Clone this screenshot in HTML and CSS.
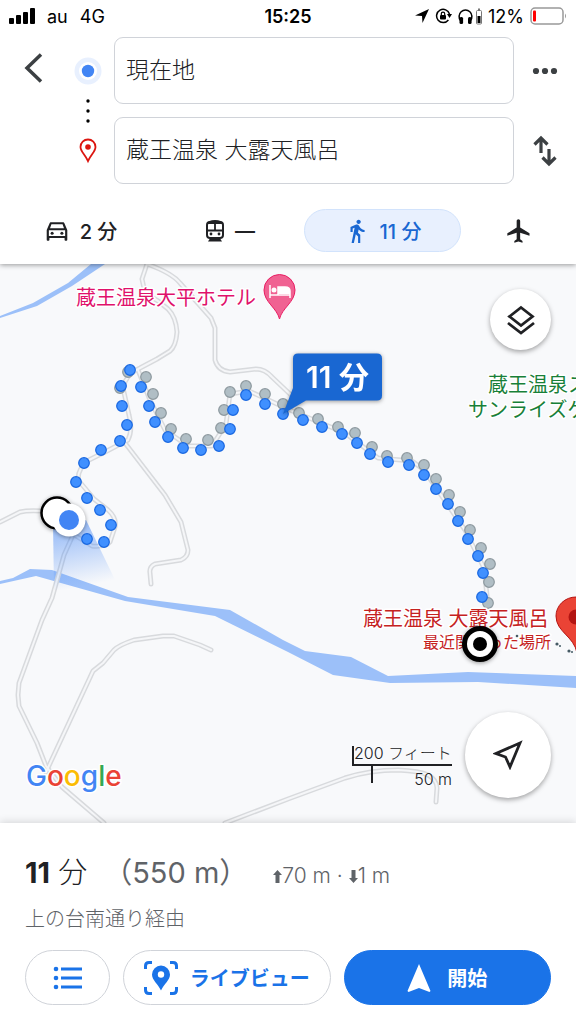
FILE: index.html
```html
<!DOCTYPE html>
<html lang="ja">

<head>
    <meta charset="utf-8">
    <meta name="viewport" content="width=device-width, initial-scale=1.0">
    <title>蔵王温泉 大露天風呂 - 経路</title>
    <link rel="stylesheet" href="styles.css">
</head>

<body>
    <header class="top">
        <div class="status">
            <div class="status_left">
                <svg width="26" height="16" viewBox="0 0 26 16">
                    <rect x="0" y="10" width="5" height="6" rx="1" />
                    <rect x="7" y="7" width="5" height="9" rx="1" />
                    <rect x="14" y="4" width="5" height="12" rx="1" />
                    <rect x="21" y="0" width="5" height="16" rx="1" />
                </svg>
                <span>au</span>
                <span>4G</span>
            </div>
            <time class="clock">15:25</time>
            <div class="status_right">
                <svg width="14" height="14" viewBox="0 0 14 14">
                    <path d="M14 0L0 6.500l7 .5.5 7z" />
                </svg>
                <svg width="17" height="16" viewBox="0 0 17 16">
                    <path d="M14.500 6A6.600 6.600 0 1 0 13.400 12" fill="none" stroke="#000" stroke-width="1.500" />
                    <path d="M12 6h5l-2.500 4z" />
                    <rect x="5" y="7" width="6" height="4.500" rx="1" />
                    <path d="M6.300 7V5.800a1.700 1.700 0 0 1 3.400 0V7" fill="none" stroke="#000" stroke-width="1.200" />
                </svg>
                <svg width="24" height="17" viewBox="0 0 24 17">
                    <path d="M2.500 12.500A6.400 6.400 0 1 1 12.500 12.500" fill="none" stroke="#000" stroke-width="1.500" />
                    <rect x="1.500" y="9" width="3.600" height="7" rx="1.500" />
                    <rect x="10" y="9" width="3.600" height="7" rx="1.500" />
                    <rect x="18.500" y="2.500" width="5" height="13.500" rx="1" fill="#fff" stroke="#777" />
                    <rect x="20" y="0.500" width="2" height="1.500" fill="#777" />
                    <rect x="19.500" y="8" width="3" height="7" />
                </svg>
                <span>12%</span>
                <svg width="37" height="18" viewBox="0 0 37 18">
                    <rect x="1" y="1" width="32" height="16" rx="4" fill="#fff" stroke="#999" stroke-width="1.500" />
                    <rect x="3" y="3.500" width="3" height="11" rx="1" fill="#f00" />
                    <path d="M35 6.500q2 2.500 0 5z" fill="#999" />
                </svg>
            </div>
        </div>

        <form class="route_form">
            <button type="button" class="icon_btn back" aria-label="戻る">
                <svg width="20" height="30" viewBox="0 0 20 30">
                    <path d="M18 1.500L4 15l14 13.500" fill="none" stroke="#3c4043" stroke-width="3.500" />
                </svg>
            </button>
            <svg class="stops" width="28" height="110" viewBox="0 0 28 110">
                <circle cx="14" cy="15" r="13.500" fill="#e8f0fe" />
                <circle cx="14" cy="15" r="9" fill="#fff" />
                <circle cx="14" cy="15" r="6.200" fill="#4285f4" />
                <circle cx="14" cy="45" r="1.700" />
                <circle cx="14" cy="55" r="1.700" />
                <circle cx="14" cy="65" r="1.700" />
                <path d="M14 105C11 98.500 6.500 95.500 6.500 91a7.500 7.500 0 0 1 15 0c0 4.500-4.500 7.500-7.500 14z" fill="#fff" stroke="#dc1610" stroke-width="1.800" />
                <circle cx="14" cy="91" r="2.800" fill="#dc1610" />
            </svg>
            <input class="field from" type="text" value="現在地" aria-label="出発地">
            <input class="field to" type="text" value="蔵王温泉 大露天風呂" aria-label="目的地">
            <button type="button" class="icon_btn more" aria-label="その他">
                <svg width="26" height="8" viewBox="0 0 26 8">
                    <circle cx="4" cy="4" r="3.100" />
                    <circle cx="13" cy="4" r="3.100" />
                    <circle cx="22" cy="4" r="3.100" />
                </svg>
            </button>
            <button type="button" class="icon_btn swap" aria-label="入れ替え">
                <svg width="24" height="32" viewBox="0 0 24 32" fill="none" stroke="#3c4043" stroke-width="3.200">
                    <path d="M8 18V3M1.500 9.500l6.500-6.500 6.500 6.500" />
                    <path d="M16 14v15M9.500 22.500l6.500 6.500 6.500-6.500" />
                </svg>
            </button>
        </form>

        <nav class="modes">
            <button class="mode">
                <svg width="26" height="26" viewBox="0 0 24 24">
                    <path d="M18.920 5.010C18.720 4.420 18.160 4 17.500 4h-11c-.66 0-1.210.42-1.420 1.010L2.500 11v9c0 .55.45 1 1 1h.5c.55 0 1-.45 1-1v-1.500h14V20c0 .55.45 1 1 1h.5c.55 0 1-.45 1-1v-9l-2.580-5.990zM6.850 5.800h10.290l1.300 3.700H5.550l1.300-3.700zM19.500 16.500h-15V11.300h15v5.200z" />
                    <circle cx="7.500" cy="14" r="1.400" />
                    <circle cx="16.500" cy="14" r="1.400" />
                </svg>
                2 分
            </button>
            <button class="mode">
                <svg width="20" height="24" viewBox="0 0 20 24">
                    <path d="M3 22.500h14l-2.500-4h-9z" />
                    <rect x="2" y="3" width="16" height="16" rx="3" fill="#fff" stroke="#202124" stroke-width="2" />
                    <path d="M2 5Q3 1 10 1t8 4z" />
                    <path d="M2 11.500h16M10 5v6.500" stroke="#202124" stroke-width="1.800" />
                    <circle cx="6" cy="15" r="1.400" />
                    <circle cx="14" cy="15" r="1.400" />
                </svg>
                —
            </button>
            <button class="mode selected">
                <svg width="26" height="26" viewBox="0 0 24 24">
                    <path d="M13.500 5.500c1.100 0 2-.9 2-2s-.9-2-2-2-2 .9-2 2 .9 2 2 2zM9.800 8.900L7 23h2.100l1.800-8 2.100 2v6h2v-7.500l-2.100-2 .6-3C14.800 12 16.800 13 19 13v-2c-1.900 0-3.500-1-4.300-2.400l-1-1.600c-.4-.6-1-1-1.700-1-.3 0-.5.1-.8.1L6 8.300V13h2V9.600l1.800-.7" />
                </svg>
                11 分
            </button>
            <button class="mode" aria-label="飛行機">
                <svg width="28" height="28" viewBox="0 0 24 24">
                    <path d="M21 16v-2l-8-5V3.500c0-.83-.67-1.500-1.500-1.500S10 2.670 10 3.500V9l-8 5v2l8-2.500V19l-2 1.500V22l3.500-1 3.500 1v-1.500L13 19v-5.500l8 2.500z" />
                </svg>
            </button>
        </nav>
    </header>

    <main class="map">
        <svg class="map_canvas" viewBox="0 264 576 559" preserveAspectRatio="xMidYMid slice">
            <defs>
                <marker id="dot_blue" markerUnits="userSpaceOnUse" markerWidth="14" markerHeight="14" refX="7" refY="7">
                    <circle cx="7" cy="7" r="5.300" fill="#4090ff" stroke="#1967e0" stroke-width="1.200" />
                </marker>
                <marker id="dot_grey" markerUnits="userSpaceOnUse" markerWidth="14" markerHeight="14" refX="7" refY="7">
                    <circle cx="7" cy="7" r="5.300" fill="#b0bec5" stroke="#8d999f" stroke-width="1.200" />
                </marker>
                <linearGradient id="beam" x1="0" y1="0" x2="0.200" y2="1">
                    <stop offset="0" stop-color="#4285f4" stop-opacity="0.600" />
                    <stop offset="1" stop-color="#4285f4" stop-opacity="0" />
                </linearGradient>
                <g id="roads">
                    <path d="M147 264L142 279L144 288Q147 295 158 301L168 309Q176 317 177 332Q176 346 170 351L157 359L140 368Q126 374 123 388L129 415Q133 430 128 440L105 452L87 461Q76 472 79 481L94 499L108 510Q117 518 115 527L110 542Q106 547 92 546L76 536" />
                    <path d="M147 264Q172 273 180 283L211 318L215 328V360Q218 371 230 372L256 369Q265 369 272 377L292 396" />
                    <path d="M125 443L165 495L181 522L188 550Q188 557 181 560L155 564Q149 567 150 573L151 584" />
                    <path d="M0 522L20 512Q28 510 42 511" />
                    <path d="M73 535L64 555L52 598L42 620L19 683L18 695L19 706L37 743L46 766L62 787L104 823" />
                    <path d="M46 772L93 671L103 663L114 650Q119 645 134 640L163 636H174L200 645L211 650" />
                    <path d="M225 823L288 799L345 778Q370 770 398 770Q420 771 428 775Q437 780 437 788L436 802" />
                    <path d="M138 370L150 400L165 430L188 446H212L226 424L230 394L249 391L290 410L345 433L378 458L412 461L424 470L465 530L484 568L488 605" />
                </g>
            </defs>

            <!-- rivers -->
            <path class="water" d="M0 316L33 303L68 283L91 264H105L72 286L37 306L0 318z" />
            <path class="water" d="M0 581L13 578L30 569L52 570L128 597L230 610L283 640L305 651L351 657L388 676L468 672L576 676V688L478 682L390 683L333 675L288 652L215 616L125 601L36 576L0 584z" />

            <use href="#roads" class="road_edge" />
            <use href="#roads" class="road_fill" />

            <!-- place names -->
            <text class="label hotel" x="76" y="305">蔵王温泉大平ホテル</text>
            <text class="label park" x="488" y="392">蔵王温泉ス</text>
            <text class="label park" x="468" y="417">サンライズゲ</text>

            <path d="M279.500 319C277 308 264 302 264 290a15.500 15.500 0 0 1 31 0c0 12-13 18-15.500 29z" fill="#f06292" stroke="#e91e63" />
            <path d="M270 285v13M270 295h20v3M290 295v-4q0-4-5-4h-7v8" fill="none" stroke="#fff" stroke-width="1.500" />
            <path d="M278 287h7q5 0 5 4v3h-12z" fill="#fff" />
            <circle cx="274" cy="290" r="2.500" fill="#fff" />

            <!-- walking route -->
            <path class="beam" d="M53 522L54 590H120L86 520z" fill="url(#beam)" />
            <polyline class="dots_grey" points="128,372 120,388 146,377 153,394 161,413 171,429 186,439 208,440 221,428 224,410 230,392 246,386 265,394 283,404 299,413 318,419 338,427 355,433 372,447 387,456 407,458 424,465 436,479 449,495 460,512 470,530 481,548 490,564 489,582 488,603" />
            <polyline class="dots_blue" points="87,539 104,542 111,525 100,510 87,498 76,482 84,463 101,450 120,441 127,425 122,406 121,386 130,370 141,387 149,406 155,422 168,437 183,448 201,450 219,446 230,429 233,410 246,395 265,404 283,414 303,420 322,427 342,434 357,443 370,454 388,462 409,465 424,475 436,489 448,504 458,521 468,539 478,556 483,573 482,597" />

            <g class="lifted">
                <circle cx="57" cy="513" r="15.500" fill="#fff" stroke="#000" stroke-width="2.500" />
                <circle cx="69" cy="520" r="16.500" fill="#fff" />
                <circle cx="69" cy="520" r="10" fill="#4285f4" />
            </g>

            <text class="label place" x="363" y="626">蔵王温泉 大露天風呂</text>
            <text class="label place note" x="423" y="648">最近関わった場所</text>
            <g fill="#455a64">
                <circle cx="557" cy="644" r="1.600" />
                <circle cx="560" cy="646" r="1" />
                <circle cx="569" cy="651" r="1.600" />
                <circle cx="572" cy="652" r="1" />
                <circle cx="517" cy="636" r="1.300" />
            </g>
            <path d="M577 653C574 636 556 632 556 616a20 19 0 0 1 40 0c0 16-16 20-19 37z" fill="#ea4335" stroke="#b31412" />
            <circle cx="576" cy="617" r="7.500" fill="#b31412" />
            <g class="lifted">
                <circle cx="480" cy="644" r="15.500" fill="#fff" stroke="#000" stroke-width="5" />
                <circle cx="480" cy="644" r="7" />
            </g>

            <g class="lifted">
                <path d="M298 353.500h79q5 0 5 5v37q0 5-5 5H306L283 414L293 388V358.500q0-5 5-5z" fill="#1967d2" />
                <text class="eta" x="306" y="388">11 分</text>
            </g>

            <text class="google" x="26" y="786"><tspan fill="#4285f4">G</tspan><tspan fill="#ea4335">o</tspan><tspan fill="#fbbc04">o</tspan><tspan fill="#4285f4">g</tspan><tspan fill="#34a853">l</tspan><tspan fill="#ea4335">e</tspan></text>
        </svg>

        <button class="fab layers" aria-label="レイヤ">
            <svg width="28" height="30" viewBox="0 0 28 30" fill="none" stroke="#202124" stroke-width="2.800">
                <path d="M14 2.500L25.500 11.500L14 20.500L2.500 11.500z" />
                <path d="M1 18l13 10 13-10" />
            </svg>
        </button>

        <div class="scale">
            <span class="scale_ft">200 フィート</span>
            <span class="scale_m">50 m</span>
        </div>

        <button class="fab locate" aria-label="現在地を表示">
            <svg width="30" height="30" viewBox="0 0 30 30">
                <path d="M27 3L3 13.500L12.500 17L17 27z" fill="none" stroke="#202124" stroke-width="2.800" />
            </svg>
        </button>
    </main>

    <section class="sheet">
        <h1 class="summary">
            <span class="time"><b>11</b> 分</span>
            <span class="distance">（550 m）</span>
            <span class="climb">
                <svg width="9" height="13" viewBox="0 0 9 13"><path d="M4.500 0L9 5H6.500v8h-4V5H0z" /></svg>70 m · <svg width="9" height="13" viewBox="0 0 9 13"><path d="M4.500 13L0 8h2.500V0h4v8H9z" /></svg>1 m
            </span>
        </h1>
        <p class="via">上の台南通り経由</p>
        <div class="actions">
            <button class="pill steps" aria-label="経路の詳細">
                <svg width="30" height="24" viewBox="0 0 30 24">
                    <circle cx="3" cy="3" r="2.300" />
                    <circle cx="3" cy="12" r="2.300" />
                    <circle cx="3" cy="21" r="2.300" />
                    <path d="M8 3h21M8 12h21M8 21h21" stroke="#1a73e8" stroke-width="3" />
                </svg>
            </button>
            <button class="pill live">
                <svg width="34" height="34" viewBox="0 0 34 34">
                    <path d="M1.500 8V5q0-3.500 3.500-3.500h3M26 1.500h3q3.500 0 3.500 3.500v3M32.500 26v3q0 3.500-3.500 3.500h-3M8 32.500H5q-3.500 0-3.500-3.500v-3" fill="none" stroke="#1a73e8" stroke-width="3" />
                    <path d="M17 29.500C14 23 8 19 8 13.500a9 9 0 0 1 18 0C26 19 20 23 17 29.500z" />
                    <circle cx="17" cy="13.500" r="3.200" fill="#fff" />
                </svg>
                ライブビュー
            </button>
            <button class="pill start">
                <svg width="24" height="30" viewBox="0 0 24 30">
                    <path d="M12 1l11.500 27-1 1L12 25 1.500 29l-1-1z" />
                </svg>
                開始
            </button>
        </div>
    </section>
</body>

</html>
```
FILE: styles.css
```css
* {
    box-sizing: border-box;
}

body {
    margin: 0;
    min-height: 100vh;
    display: flex;
    flex-direction: column;
    background: #fff;
    color: #202124;
    font-family: Inter, "Noto Sans CJK JP", sans-serif;
}

button,
input {
    font-family: inherit;
    color: inherit;
}

button {
    border: none;
    background: none;
    padding: 0;
    cursor: pointer;
}

svg {
    flex: none;
}

/* header */
.top {
    position: relative;
    z-index: 1;
    padding-bottom: 12px;
    background: #fff;
    box-shadow: 0 1px 5px rgba(0, 0, 0, 0.4);
}

.status {
    display: grid;
    grid-template-columns: 1fr auto 1fr;
    align-items: center;
    height: 32px;
    padding: 0 9px;
    font-size: 18px;
    color: #000;
}

.status_left {
    display: flex;
    align-items: center;
    gap: 12px;
}

.status_right {
    display: flex;
    align-items: center;
    justify-content: flex-end;
    gap: 6px;
}

.clock {
    font-weight: 600;
}

.route_form {
    display: grid;
    grid-template-columns: 61px 53px 1fr 62px;
    grid-template-rows: 67px 67px;
    row-gap: 13px;
    align-items: center;
    justify-items: center;
    margin-top: 5px;
}

.back {
    grid-area: 1 / 1;
}

.stops {
    grid-area: 1 / 2 / 3 / 3;
}

.field {
    width: 100%;
    height: 67px;
    padding: 0 11px 5px;
    border: 1px solid #d0d3d9;
    border-radius: 9px;
    font-size: 23px;
    font-weight: 300;
    background: #fff;
}

.from {
    grid-area: 1 / 3;
}

.to {
    grid-area: 2 / 3;
}

.more {
    grid-area: 1 / 4;
}

.swap {
    grid-area: 2 / 4;
}

.icon_btn {
    display: flex;
    padding: 6px;
    fill: #3c4043;
}

.back {
    padding: 0 0 6px 4px;
}

.modes {
    display: grid;
    grid-template-columns: 151fr 148fr 157fr 115fr;
    margin-top: 25px;
    padding-left: 5px;
}

.mode {
    display: flex;
    align-items: center;
    justify-content: center;
    gap: 10px;
    height: 43px;
    border: 1px solid transparent;
    border-radius: 22px;
    font-size: 20px;
    font-weight: 500;
    fill: #202124;
}

.mode.selected {
    background: #e8f0fe;
    border-color: #d2e3fc;
    color: #1967d2;
    fill: #1967d2;
}

/* map */
.map {
    position: relative;
    flex: 1;
    min-height: 400px;
    overflow: hidden;
    background: #f8f9fb;
}

.map_canvas {
    position: absolute;
    inset: 0;
    width: 100%;
    height: 100%;
}

.water {
    fill: #9cc0f9;
}

.road_edge,
.road_fill {
    fill: none;
    stroke-linecap: round;
    stroke-linejoin: round;
}

.road_edge {
    stroke: #d8dadd;
    stroke-width: 5px;
}

.road_fill {
    stroke: #f5f6f8;
    stroke-width: 2px;
}

.dots_grey,
.dots_blue {
    fill: none;
}

.dots_grey {
    marker: url(#dot_grey);
}

.dots_blue {
    marker: url(#dot_blue);
}

.lifted {
    filter: drop-shadow(0 1px 2px rgba(0, 0, 0, 0.4));
}

.label {
    font-size: 20px;
    stroke: #fff;
    stroke-width: 3px;
    stroke-linejoin: round;
    paint-order: stroke;
}

.hotel {
    fill: #e0116b;
}

.park {
    fill: #188038;
}

.place {
    fill: #c5221f;
}

.note {
    font-size: 16px;
}

.eta {
    font-size: 30px;
    font-weight: 600;
    fill: #fff;
}

.google {
    font-family: Inter, sans-serif;
    font-size: 28px;
    font-weight: 500;
    stroke: #fff;
    stroke-width: 3px;
    stroke-linejoin: round;
    paint-order: stroke;
}

.fab {
    position: absolute;
    right: 25px;
    display: flex;
    align-items: center;
    justify-content: center;
    border-radius: 50%;
    background: #fff;
    box-shadow: 0 2px 5px rgba(0, 0, 0, 0.35);
}

.layers {
    top: 25px;
    width: 61px;
    height: 61px;
}

.locate {
    bottom: 25px;
    width: 86px;
    height: 86px;
}

.scale {
    position: absolute;
    right: 124px;
    bottom: 31px;
    width: 100px;
    display: flex;
    flex-direction: column;
    font-size: 16px;
    font-weight: 300;
    text-align: right;
}

.scale_ft {
    height: 20px;
    padding-right: 2px;
    border-left: 2px solid #202124;
    border-bottom: 2px solid #202124;
    line-height: 14px;
    white-space: nowrap;
}

.scale_m {
    height: 26px;
    margin-left: 19px;
    line-height: 26px;
    background: linear-gradient(#202124, #202124) 0 0 / 2px 17px no-repeat;
}

/* bottom sheet */
.sheet {
    position: relative;
    padding: 25px 25px 19px;
    background: #fff;
    box-shadow: 0 -1px 8px rgba(0, 0, 0, 0.15);
}

.summary {
    display: flex;
    align-items: baseline;
    margin: 0;
    font-size: 29px;
    font-weight: 300;
    line-height: 50px;
    white-space: nowrap;
}

.time b {
    font-weight: 700;
}

.distance {
    margin-left: 16px;
    font-weight: 400;
    color: #5f6368;
}

.climb {
    margin-left: 25px;
    font-size: 21px;
    color: #5f6368;
    fill: #5f6368;
}

.via {
    margin: 3px 0 16px;
    font-size: 20px;
    font-weight: 300;
    line-height: 30px;
    color: #5f6368;
}

.actions {
    display: flex;
    gap: 13px;
}

.pill {
    display: flex;
    align-items: center;
    justify-content: center;
    gap: 12px;
    height: 55px;
    border: 1px solid #d0d3d9;
    border-radius: 28px;
    font-size: 20px;
    font-weight: 700;
    white-space: nowrap;
    color: #1a73e8;
    fill: #1a73e8;
}

.steps {
    flex: 0 0 85px;
}

.live,
.start {
    flex: 1;
}

.start {
    gap: 16px;
    border-color: #1a73e8;
    background: #1a73e8;
    color: #fff;
    fill: #fff;
}
```
